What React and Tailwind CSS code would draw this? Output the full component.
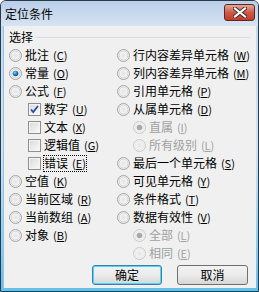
import React from "react";

const font = { fontFamily: '"Noto Sans CJK SC", "Noto Sans", sans-serif' };

const Radio = ({ checked, disabled }) => (
  <svg width="13" height="13" viewBox="0 0 13 13" className="shrink-0">
    <defs>
      <radialGradient id="rg" cx="0.5" cy="0.5" r="0.6">
        <stop offset="0" stopColor="#e4e4e4" />
        <stop offset="1" stopColor="#fafafa" />
      </radialGradient>
      <radialGradient id="dot" cx="0.4" cy="0.35" r="0.7">
        <stop offset="0" stopColor="#8ad3ff" />
        <stop offset="0.5" stopColor="#1f7fc6" />
        <stop offset="1" stopColor="#0b4a88" />
      </radialGradient>
    </defs>
    <circle cx="6.5" cy="6.5" r="6" fill="#f4f4f4" stroke={disabled ? "#c8c8c8" : "#a3a3a3"} />
    <circle cx="6.5" cy="6.5" r="4.5" fill="url(#rg)" stroke={disabled ? "#e2e2e2" : "#c9c9c9"} strokeWidth="0.8" />
    {checked && (
      <circle cx="6.5" cy="6.5" r="2.8" fill={disabled ? "#a9a9a9" : "url(#dot)"} />
    )}
  </svg>
);

const Check = ({ checked }) => (
  <svg width="13" height="13" viewBox="0 0 13 13" className="shrink-0">
    <defs>
      <linearGradient id="cb" x1="0" y1="0" x2="1" y2="1">
        <stop offset="0" stopColor="#dcdcdc" />
        <stop offset="1" stopColor="#f8f8f8" />
      </linearGradient>
    </defs>
    <rect x="0.5" y="0.5" width="12" height="12" fill="#f4f4f4" stroke="#8f8f8f" />
    <rect x="2" y="2" width="9" height="9" fill="url(#cb)" />
    {checked && (
      <path d="M3 6.5 L5.2 9 L10 3" fill="none" stroke="#2b4da0" strokeWidth="1.8" />
    )}
  </svg>
);

const Label = ({ text, k, disabled, focus }) => (
  <span
    className={
      "flex items-center h-[15px] leading-none whitespace-nowrap " +
      (disabled ? "text-[#a0a0a0] " : "text-black ") +
      (focus ? "outline outline-1 outline-dotted outline-black" : "")
    }
  >
    <span className="text-[12px]">{text}</span>
    <span className="text-[11px] ml-[4px]">
      (<span className="underline">{k}</span>)
    </span>
  </span>
);

const Row = ({ type = "radio", indent = 0, checked, disabled, text, k, focus }) => (
  <div className="flex items-center h-[18px] gap-[3px]" style={indent ? { paddingLeft: indent } : undefined}>
    {type === "radio" ? <Radio checked={checked} disabled={disabled} /> : <Check checked={checked} />}
    <Label text={text} k={k} disabled={disabled} focus={focus} />
  </div>
);

const left = [
  { text: "批注", k: "C" },
  { text: "常量", k: "O", checked: true },
  { text: "公式", k: "F" },
  { type: "check", indent: 19, text: "数字", k: "U", checked: true },
  { type: "check", indent: 19, text: "文本", k: "X" },
  { type: "check", indent: 19, text: "逻辑值", k: "G" },
  { type: "check", indent: 19, text: "错误", k: "E", focus: true },
  { text: "空值", k: "K" },
  { text: "当前区域", k: "R" },
  { text: "当前数组", k: "A" },
  { text: "对象", k: "B" },
];

const right = [
  { text: "行内容差异单元格", k: "W" },
  { text: "列内容差异单元格", k: "M" },
  { text: "引用单元格", k: "P" },
  { text: "从属单元格", k: "D" },
  { indent: 16, text: "直属", k: "I", checked: true, disabled: true },
  { indent: 16, text: "所有级别", k: "L", disabled: true },
  { text: "最后一个单元格", k: "S" },
  { text: "可见单元格", k: "Y" },
  { text: "条件格式", k: "T" },
  { text: "数据有效性", k: "V" },
  { indent: 16, text: "全部", k: "L", checked: true, disabled: true },
  { indent: 16, text: "相同", k: "E", disabled: true },
];

const App = () => {
  return (
    <div
      className="w-[259px] h-[292px] flex flex-col border border-[#2a3a4a] rounded-t-[6px] overflow-hidden bg-gradient-to-b from-[#c4d7ec] via-[#d3e2f2] to-[#5cc3ec]"
      style={font}
    >
      <div className="h-[25px] shrink-0 flex items-center justify-between pl-[4px] pr-[3px] bg-gradient-to-b from-[#b9cfe8] to-[#d6e4f3]">
        <span className="text-[12px] text-black">定位条件</span>
        <div className="w-[31px] h-[17px] mb-[2px] rounded-[3px] border border-[#5a2a22] bg-gradient-to-b from-[#e6a596] via-[#cf5a46] to-[#c33a2a] flex items-center justify-center">
          <svg width="14" height="11" viewBox="0 0 14 11">
            <path d="M2 1.5 L12 9.5 M12 1.5 L2 9.5" stroke="#3a2a2a" strokeWidth="4" strokeLinecap="square" />
            <path d="M2 1.5 L12 9.5 M12 1.5 L2 9.5" stroke="#ffffff" strokeWidth="2.2" strokeLinecap="square" />
          </svg>
        </div>
      </div>
      <div className="flex-1 mx-[2px] mb-[3px] bg-[#f0f0f0] border-l border-[#8ac6ea] flex flex-col pl-[5px] pr-[6px]">
        <div className="flex items-center h-[18px] mt-[2px] text-[12px]">
          <span className="mr-[3px]">选择</span>
          <div className="flex-1 h-px bg-[#d5dfe5] mt-[1px]"></div>
        </div>
        <div className="flex">
          <div className="w-[109px] flex flex-col">
            {left.map((r, i) => (
              <Row key={i} {...r} />
            ))}
          </div>
          <div className="flex flex-col">
            {right.map((r, i) => (
              <Row key={i} {...r} />
            ))}
          </div>
        </div>
        <div className="flex justify-end gap-[15px] mt-[3px] pr-[2px]">
          <button className="w-[70px] h-[20px] rounded-[3px] border border-[#3c7fb1] shadow-[inset_0_0_0_1px_#48d8fb] bg-gradient-to-b from-[#f2f2f2] via-[#ebebeb] to-[#d6d6d6] text-[12px] leading-none">
            确定
          </button>
          <button className="w-[71px] h-[20px] rounded-[3px] border border-[#707070] bg-gradient-to-b from-[#f2f2f2] via-[#ebebeb] to-[#d6d6d6] text-[12px] leading-none">
            取消
          </button>
        </div>
      </div>
    </div>
  );
};

export default App;
